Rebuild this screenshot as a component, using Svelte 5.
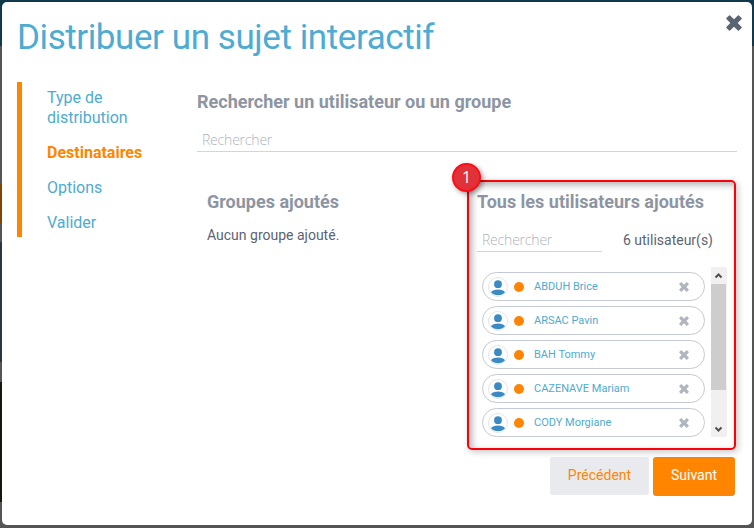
<script>
  const steps = ['Type de distribution', 'Destinataires', 'Options', 'Valider'];
  const current = 1;
  const users = ['ABDUH Brice', 'ARSAC Pavin', 'BAH Tommy', 'CAZENAVE Mariam', 'CODY Morgiane'];
</script>

{#snippet cross(size)}
  <svg width={size} height={size} viewBox="0 0 16 16" fill="currentColor">
    <path d="M4.1.4 8 4.3 11.9.4Q12.4 0 12.9.4L15.6 3.1Q16 3.6 15.6 4.1L11.7 8 15.6 11.9Q16 12.4 15.6 12.9L12.9 15.6Q12.4 16 11.9 15.6L8 11.7 4.1 15.6Q3.6 16 3.1 15.6L.4 12.9Q0 12.4.4 11.9L4.3 8 .4 4.1Q0 3.6.4 3.1L3.1.4Q3.6 0 4.1.4Z" />
  </svg>
{/snippet}

<div class="page">
  <section class="modal">
    <header>
      <h1>Distribuer un sujet interactif</h1>
      <button class="close" aria-label="Fermer">{@render cross(16)}</button>
    </header>

    <div class="body">
      <nav>
        {#each steps as step, i}
          <a class:active={i === current} href="#step{i}">{step}</a>
        {/each}
      </nav>

      <main>
        <h2>Rechercher un utilisateur ou un groupe</h2>
        <input class="search" placeholder="Rechercher" />

        <div class="columns">
          <div class="groups">
            <h2>Groupes ajoutés</h2>
            <p>Aucun groupe ajouté.</p>
          </div>

          <div class="users">
            <h2>Tous les utilisateurs ajoutés</h2>
            <div class="filter">
              <input placeholder="Rechercher" />
              <span>6 utilisateur(s)</span>
            </div>
            <div class="list">
              <ul>
                {#each users as user}
                  <li>
                    <svg class="avatar" width="20" height="20" viewBox="0 0 20 20">
                      <circle cx="10" cy="10" r="9.5" fill="#fff" stroke="#e2e5e9" />
                      <circle cx="10" cy="7.2" r="3.9" fill="#3a8bc4" />
                      <path d="M3 15.3C4.8 11.7 15.2 11.7 17 15.3C14 19.2 6 19.2 3 15.3Z" fill="#3a8bc4" />
                    </svg>
                    <i class="dot"></i>
                    <span>{user}</span>
                    <button aria-label="Retirer">{@render cross(10)}</button>
                  </li>
                {/each}
              </ul>
              <div class="scrollbar">
                <svg width="16" height="17" viewBox="0 0 16 17"><path d="M4.5 10.5 7.5 7.5 10.5 10.5" /></svg>
                <div class="thumb"></div>
                <svg width="16" height="17" viewBox="0 0 16 17"><path d="M4.5 7.5 7.5 10.5 10.5 7.5" /></svg>
              </div>
            </div>
            <div class="highlight"></div>
            <div class="marker">1</div>
          </div>
        </div>
      </main>
    </div>

    <footer>
      <button class="prev">Précédent</button>
      <button class="next">Suivant</button>
    </footer>
  </section>
</div>

<style>
  * { box-sizing: border-box; }
  .page {
    width: 754px;
    height: 528px;
    padding: 2px 2px 3px;
    font-family: Roboto, 'Liberation Sans', sans-serif;
    background:
      linear-gradient(#12384c 0 46px, #555 46px 184px, #804300 184px 223px, #555 223px 242px, #2c363d 242px 362px, #555 362px 382px, #17160f 382px 502px, #555 502px) 0 0 / 2px 528px no-repeat,
      linear-gradient(#12384c 0 46px, #555 46px);
  }
  .modal {
    height: 523px;
    background: #fff;
    border-radius: 5px;
    overflow: hidden;
  }
  h1, h2, p, ul { margin: 0; padding: 0; }
  button { border: 0; background: none; padding: 0; font: inherit; }
  header {
    display: flex;
    justify-content: space-between;
    height: 80px;
    padding: 13px 10px 0 15px;
  }
  h1 {
    font-size: 35px;
    line-height: 46px;
    font-weight: 400;
    letter-spacing: -0.42px;
    color: #4eabd1;
    white-space: nowrap;
  }
  .close { align-self: flex-start; height: 16px; color: #5b6472; }
  svg { display: block; }
  .body { display: flex; align-items: flex-start; height: 375px; padding: 0 15px; }
  nav {
    display: flex;
    flex-direction: column;
    gap: 5px;
    width: 130px;
    border-left: 5px solid #ff8500;
    padding-left: 25px;
    margin-right: 50px;
  }
  nav a {
    padding: 6px 0 4px;
    font-size: 16px;
    line-height: 20px;
    color: #4eabd1;
    text-decoration: none;
  }
  nav a.active { color: #ff8500; font-weight: 700; }
  main { width: 540px; padding-top: 8px; }
  h2 { font-size: 18px; line-height: 24px; font-weight: 700; color: #8d95a3; white-space: nowrap; }
  input {
    display: block;
    border: 0;
    border-bottom: 1px solid #d2d5da;
    background: none;
    padding: 0 5px;
    outline: 0;
    font: 300 14px 'Open Sans', sans-serif;
    letter-spacing: -0.2px;
  }
  input::placeholder { color: #aeb3bc; opacity: 1; }
  .search { width: 540px; height: 24px; margin-top: 14px; }
  .columns { display: flex; padding-top: 38px; }
  .groups { width: 280px; padding-left: 10px; }
  p, .filter span { font-size: 14px; line-height: 20px; color: #5b6472; }
  p { margin-top: 11px; }
  .users { position: relative; width: 260px; }
  .filter { display: flex; justify-content: space-between; margin-top: 13px; padding-right: 24px; }
  .filter input { width: 125px; height: 25px; }
  .filter span { margin-top: 3px; }
  .list { display: flex; justify-content: space-between; height: 170px; margin-top: 15px; padding: 0 10px 0 5px; }
  ul { display: flex; flex-direction: column; gap: 5px; width: 223px; padding-top: 5px; list-style: none; }
  li {
    display: flex;
    align-items: center;
    height: 29px;
    flex: none;
    padding: 0 15px 0 5px;
    border: 1px solid #c5c9d2;
    border-radius: 15px;
  }
  .dot { width: 10px; height: 10px; margin: 1px 10px 0 6px; border-radius: 50%; background: #ff8500; }
  .avatar { margin-top: 1px; }
  li span { flex: 1; font-size: 11px; color: #4eabd1; }
  li button { color: #b0b5be; }
  .scrollbar { display: flex; flex-direction: column; justify-content: space-between; width: 16px; background: #f0f0f0; }
  .scrollbar path { fill: none; stroke: #505050; stroke-width: 2; }
  .thumb { width: 15px; height: 106px; margin-bottom: 30px; background: #cdcdcd; }
  .highlight {
    position: absolute;
    left: -10px;
    top: -10px;
    width: 269px;
    height: 270px;
    border: 2px solid #fa0008;
    border-radius: 5px;
    box-shadow: 2px 2px 7px rgba(0, 0, 0, 0.22), inset 3px 3px 7px rgba(0, 0, 0, 0.3);
    pointer-events: none;
  }
  .marker {
    position: absolute;
    left: -25px;
    top: -27px;
    width: 29px;
    height: 29px;
    border: 2px solid #ff0d17;
    border-radius: 50%;
    background: #e03238;
    box-shadow: 2px 2px 5px rgba(0, 0, 0, 0.4);
    font: 16px/24px 'Open Sans', sans-serif;
    text-align: center;
    color: #fff;
  }
  footer { display: flex; justify-content: flex-end; gap: 4px; padding-right: 17px; }
  footer button { height: 38px; border-radius: 3px; font-size: 14px; line-height: 36px; padding-bottom: 2px; }
  .prev { width: 99px; background: #e9eaee; color: #ff8500; }
  .next { width: 82px; background: #ff8500; color: #fff; box-shadow: 0 1px 0 #9a9a9a; }
</style>
